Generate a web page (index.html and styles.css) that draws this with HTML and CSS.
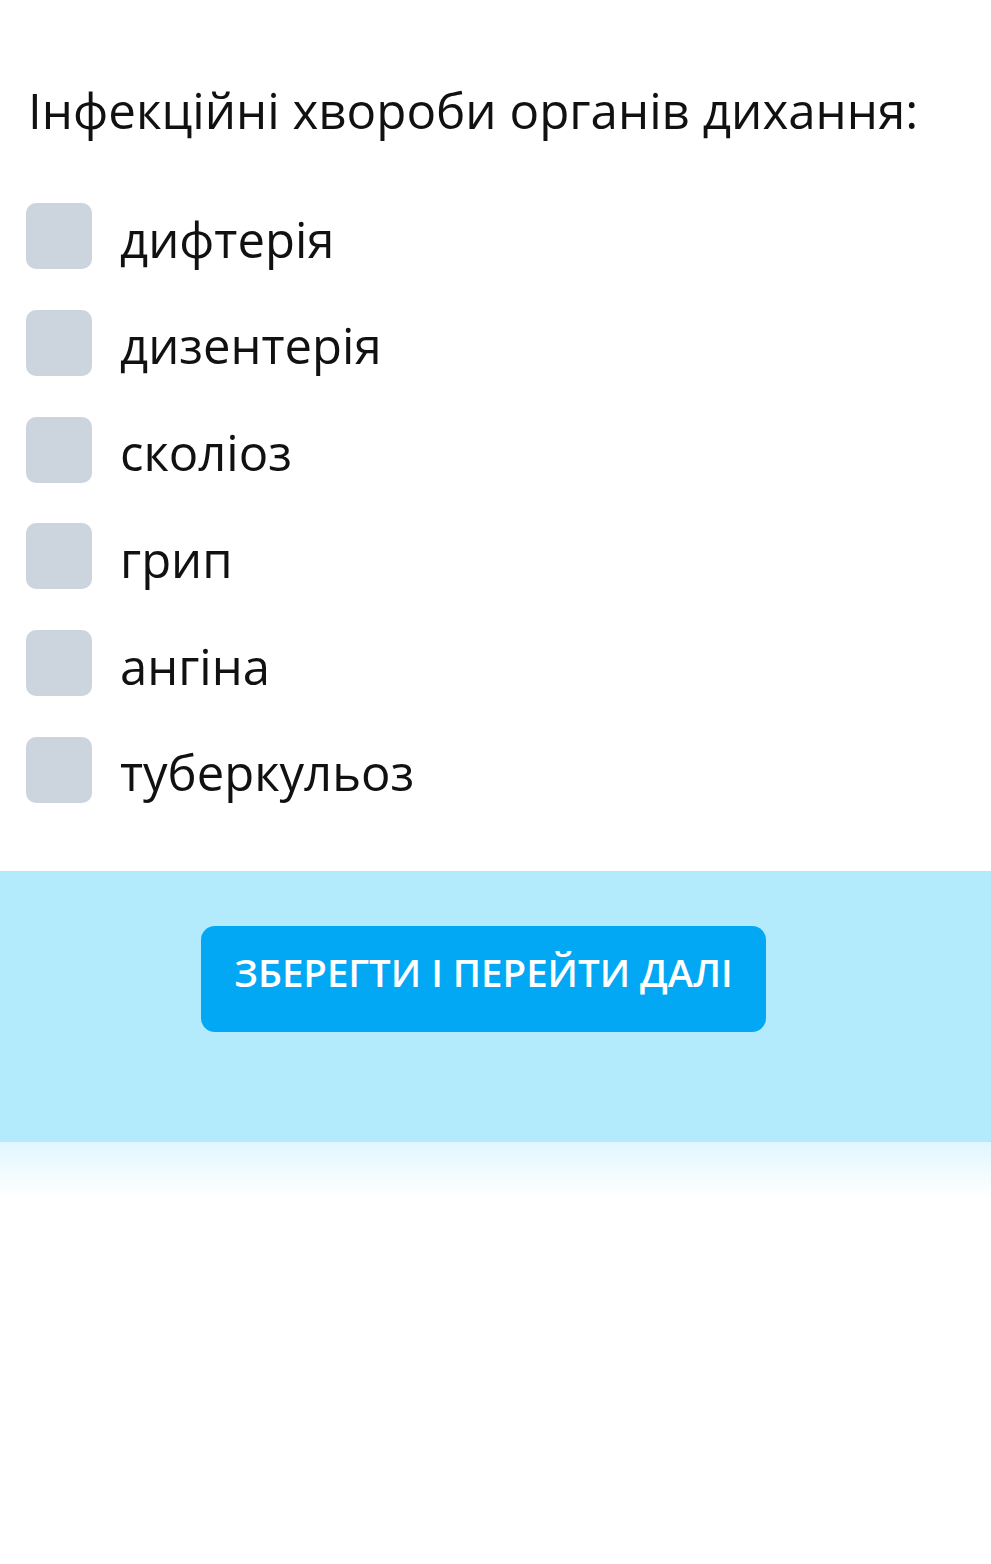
FILE: index.html
```html
<!DOCTYPE html>
<html lang="uk">
<head>
<meta charset="utf-8">
<link rel="stylesheet" href="styles.css">
</head>
<body>
<main class="quiz">
  <h1 class="question">Інфекційні хвороби органів дихання:</h1>
  <ul class="options">
    <li class="option"><span class="box"></span><span class="label">дифтерія</span></li>
    <li class="option"><span class="box"></span><span class="label">дизентерія</span></li>
    <li class="option"><span class="box"></span><span class="label">сколіоз</span></li>
    <li class="option"><span class="box"></span><span class="label">грип</span></li>
    <li class="option"><span class="box"></span><span class="label">ангіна</span></li>
    <li class="option"><span class="box"></span><span class="label">туберкульоз</span></li>
  </ul>
</main>
<footer class="actions">
  <button class="submit">ЗБЕРЕГТИ І ПЕРЕЙТИ ДАЛІ</button>
</footer>
<div class="fade"></div>
</body>
</html>
```

FILE: styles.css
```css
html, body {
  margin: 0;
  padding: 0;
  background: #ffffff;
}
body {
  font-family: "Open Sans", "Noto Sans", sans-serif;
  color: #111111;
}
.quiz {
  padding: 78px 26px 0 28px;
}
.question {
  margin: 0;
  font-size: 49.3px;
  font-weight: 400;
  line-height: 64px;
}
.options {
  list-style: none;
  margin: 0;
  padding: 0;
  padding-top: 61px;
  padding-bottom: 68px;
  display: flex;
  flex-direction: column;
  gap: 40.8px;
}
.option {
  display: flex;
  align-items: center;
  gap: 28px;
  height: 66px;
  margin-left: -2px;
}
.box {
  width: 66px;
  height: 66px;
  border-radius: 10px;
  background: #ccd4dd;
  flex: none;
}
.label {
  font-size: 49px;
  line-height: 66px;
  padding-top: 5px;
}
.actions {
  background: #b3ebfd;
  height: 271px;
  padding-top: 55px;
  box-sizing: border-box;
  display: flex;
  justify-content: center;
  align-items: flex-start;
}
.submit {
  width: 565px;
  height: 106px;
  border: none;
  border-radius: 14px;
  background: #02a8f3;
  color: #ffffff;
  font-family: "Open Sans", "Noto Sans", sans-serif;
  font-weight: 600;
  font-size: 38.4px;
  margin-right: 24px;
  padding: 0 0 14px 0;
}
.fade {
  height: 56px;
  background: linear-gradient(#e0f7fe, #ffffff);
}
```
